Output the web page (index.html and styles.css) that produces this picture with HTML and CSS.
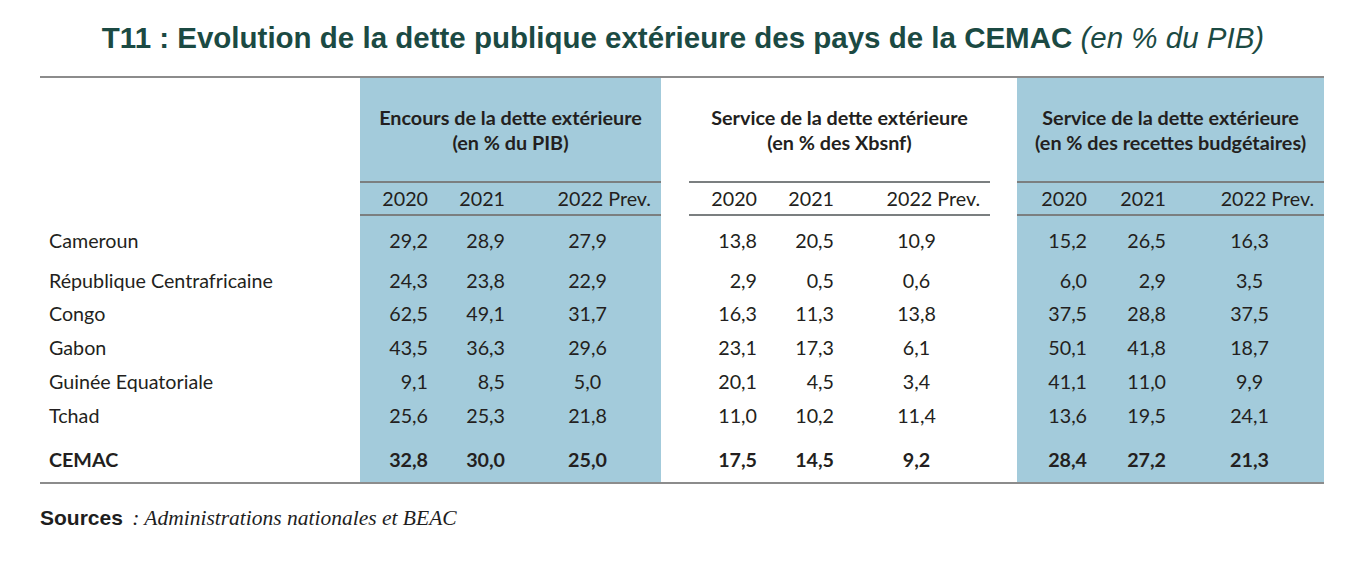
FILE: index.html
```html
<!DOCTYPE html>
<html lang="fr">
<head>
<meta charset="utf-8">
<title>T11 : Evolution de la dette publique extérieure des pays de la CEMAC</title>
<link rel="stylesheet" href="styles.css">
</head>
<body>
<main class="page">
  <h1 class="title">T11 : Evolution de la dette publique extérieure des pays de la CEMAC <em>(en % du PIB)</em></h1>
  <table class="dt">
    <colgroup>
      <col class="c-label">
      <col class="c-n"><col class="c-n"><col class="c-w">
      <col class="c-sp1">
      <col class="c-n"><col class="c-n"><col class="c-w">
      <col class="c-sp2">
      <col class="c-n3"><col class="c-n3"><col class="c-w3">
    </colgroup>
    <thead>
      <tr class="r-group">
        <th></th>
        <th colspan="3" class="blue">Encours de la dette extérieure<br>(en % du PIB)</th>
        <th></th>
        <th colspan="3">Service de la dette extérieure<br>(en % des Xbsnf)</th>
        <th></th>
        <th colspan="3" class="blue">Service de la dette extérieure<br>(en % des recettes budgétaires)</th>
      </tr>
      <tr class="r-year">
        <th></th>
        <th class="blue yr n">2020</th><th class="blue yr n">2021</th><th class="blue yr p">2022 Prev.</th>
        <th></th>
        <th class="yr n">2020</th><th class="yr n">2021</th><th class="yr p">2022 Prev.</th>
        <th></th>
        <th class="blue yr n">2020</th><th class="blue yr n">2021</th><th class="blue yr p">2022 Prev.</th>
      </tr>
    </thead>
    <tbody>
      <tr class="r-first">
        <td class="lbl">Cameroun</td>
        <td class="blue n">29,2</td><td class="blue n">28,9</td><td class="blue w">27,9</td><td></td>
        <td class="n">13,8</td><td class="n">20,5</td><td class="w">10,9</td><td></td>
        <td class="blue n">15,2</td><td class="blue n">26,5</td><td class="blue w">16,3</td>
      </tr>
      <tr class="r-second">
        <td class="lbl">République Centrafricaine</td>
        <td class="blue n">24,3</td><td class="blue n">23,8</td><td class="blue w">22,9</td><td></td>
        <td class="n">2,9</td><td class="n">0,5</td><td class="w">0,6</td><td></td>
        <td class="blue n">6,0</td><td class="blue n">2,9</td><td class="blue w">3,5</td>
      </tr>
      <tr class="r-mid">
        <td class="lbl">Congo</td>
        <td class="blue n">62,5</td><td class="blue n">49,1</td><td class="blue w">31,7</td><td></td>
        <td class="n">16,3</td><td class="n">11,3</td><td class="w">13,8</td><td></td>
        <td class="blue n">37,5</td><td class="blue n">28,8</td><td class="blue w">37,5</td>
      </tr>
      <tr class="r-mid">
        <td class="lbl">Gabon</td>
        <td class="blue n">43,5</td><td class="blue n">36,3</td><td class="blue w">29,6</td><td></td>
        <td class="n">23,1</td><td class="n">17,3</td><td class="w">6,1</td><td></td>
        <td class="blue n">50,1</td><td class="blue n">41,8</td><td class="blue w">18,7</td>
      </tr>
      <tr class="r-mid">
        <td class="lbl">Guinée Equatoriale</td>
        <td class="blue n">9,1</td><td class="blue n">8,5</td><td class="blue w">5,0</td><td></td>
        <td class="n">20,1</td><td class="n">4,5</td><td class="w">3,4</td><td></td>
        <td class="blue n">41,1</td><td class="blue n">11,0</td><td class="blue w">9,9</td>
      </tr>
      <tr class="r-mid">
        <td class="lbl">Tchad</td>
        <td class="blue n">25,6</td><td class="blue n">25,3</td><td class="blue w">21,8</td><td></td>
        <td class="n">11,0</td><td class="n">10,2</td><td class="w">11,4</td><td></td>
        <td class="blue n">13,6</td><td class="blue n">19,5</td><td class="blue w">24,1</td>
      </tr>
      <tr class="r-total">
        <td class="lbl">CEMAC</td>
        <td class="blue n">32,8</td><td class="blue n">30,0</td><td class="blue w">25,0</td><td></td>
        <td class="n">17,5</td><td class="n">14,5</td><td class="w">9,2</td><td></td>
        <td class="blue n">28,4</td><td class="blue n">27,2</td><td class="blue w">21,3</td>
      </tr>
    </tbody>
  </table>
  <p class="sources"><strong>Sources</strong> <em>: Administrations nationales et BEAC</em></p>
</main>
</body>
</html>
```
FILE: styles.css
```css
html, body {
  margin: 0;
  padding: 0;
  background: #ffffff;
}

.page {
  display: flex;
  flex-direction: column;
  padding: 21px 0 0 40px;
}

.title {
  margin: 0 44px 0 0;
  font-family: "Liberation Sans", Arial, sans-serif;
  font-size: 29.5px;
  line-height: 34px;
  font-weight: 700;
  color: #1b4a43;
  text-align: center;
}

.title em {
  font-weight: 400;
  font-style: italic;
}

.dt {
  margin-top: 21px;
  width: 1284px;
  table-layout: fixed;
  border-collapse: separate;
  border-spacing: 0;
  border-top: 2px solid #8c8c8c;
  border-bottom: 2px solid #8c8c8c;
  font-family: Lato, "Open Sans", sans-serif;
  font-size: 19.7px;
  color: #231f20;
}

.c-label { width: 320px; }
.c-n { width: 77px; }
.c-w { width: 147px; }
.c-sp1 { width: 28px; }
.c-sp2 { width: 27px; }
.c-n3 { width: 79px; }
.c-w3 { width: 149px; }

.dt th, .dt td {
  padding: 0;
  vertical-align: middle;
  white-space: nowrap;
}

.blue { background: #a3cbdb; }

.r-group th {
  height: 103px;
  font-weight: 700;
  font-size: 19.8px;
  line-height: 25px;
  text-align: center;
}

.r-year th {
  height: 31px;
  font-weight: 400;
}

.r-year th.yr {
  border-top: 2px solid #7b7f80;
  border-bottom: 2px solid #7b7f80;
}

.n { text-align: right; padding-right: 9px !important; }
.w { text-align: center; }
.p { text-align: right; padding-right: 10px !important; }

.lbl { padding-left: 9px !important; text-align: left; }

.r-first td { height: 48px; }
.r-second td { height: 32px; }
.r-mid td { height: 34px; }
.r-total td {
  height: 46px;
  padding-top: 4px;
  font-weight: 700;
}

.sources {
  margin: 22px 0 0;
  font-size: 21px;
  line-height: 24px;
  color: #1e1e1e;
}

.sources strong {
  font-family: "Liberation Sans", Arial, sans-serif;
  font-weight: 700;
}

.sources em {
  font-family: "Liberation Serif", "Times New Roman", serif;
  font-style: italic;
  font-size: 21.5px;
  margin-left: 4px;
}
```
